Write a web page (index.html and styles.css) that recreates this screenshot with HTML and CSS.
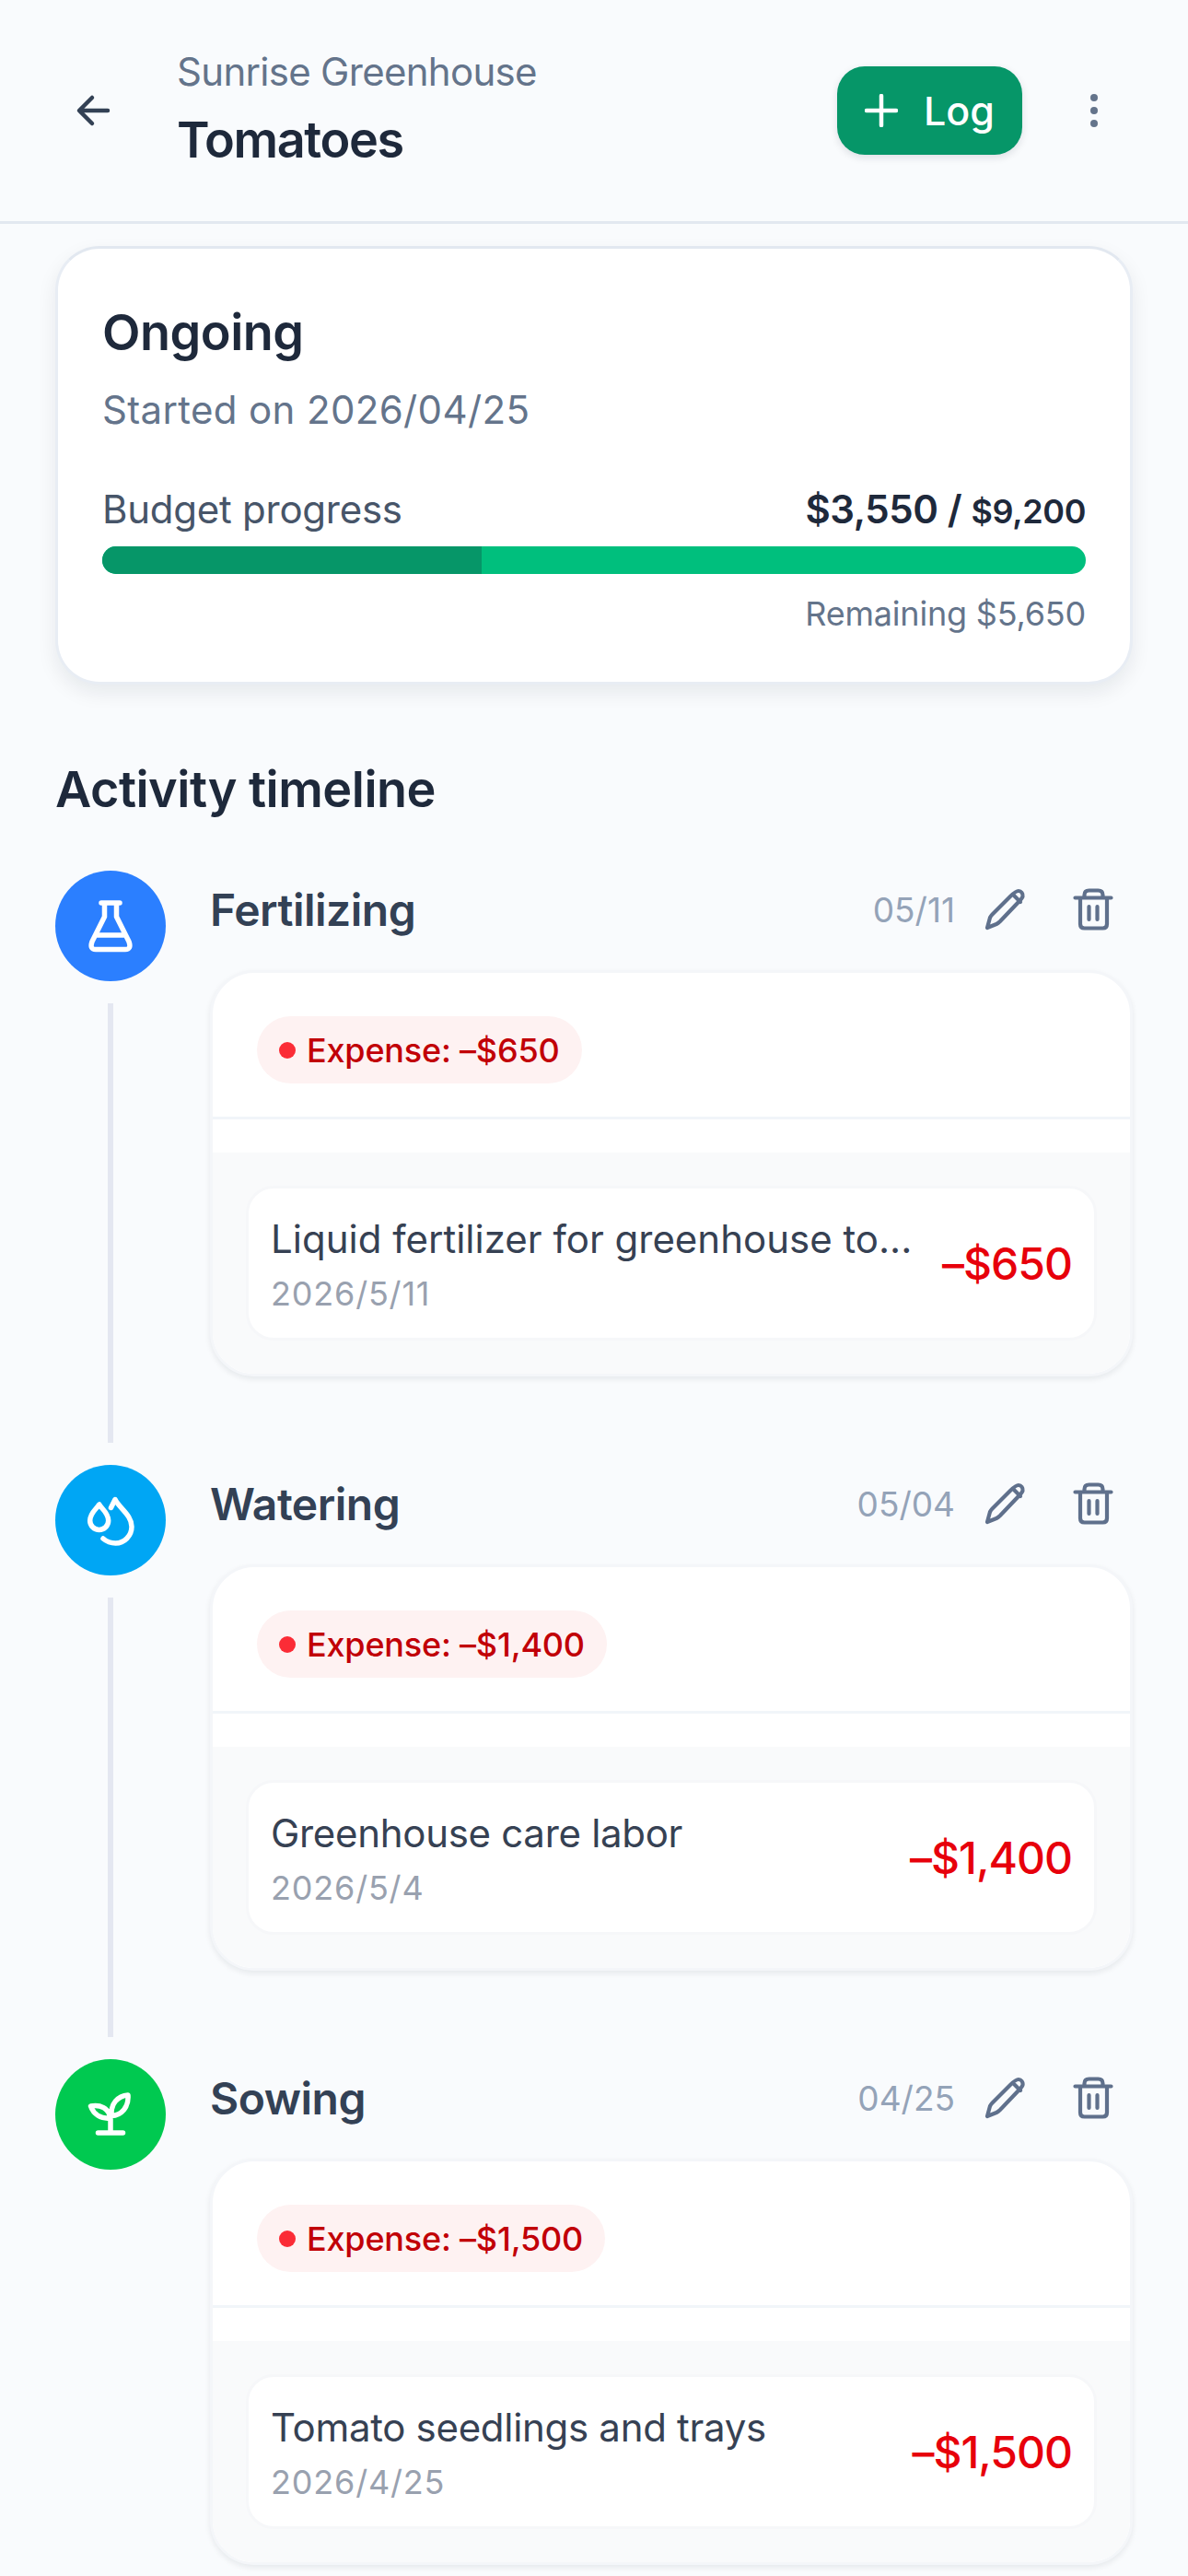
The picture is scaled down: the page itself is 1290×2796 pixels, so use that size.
FILE: index.html
```html
<!DOCTYPE html>
<html lang="en">
<head>
<meta charset="utf-8">
<title>Tomatoes</title>
<link rel="stylesheet" href="styles.css">
</head>
<body>
<header class="topbar">
  <button class="back" aria-label="Back">
    <svg viewBox="0 0 60 60" class="ico-60"><path d="M45 30H15M28 16 14 30l14 14" class="s-dark"/></svg>
  </button>
  <div class="titles">
    <div class="subtitle">Sunrise Greenhouse</div>
    <h1 class="title">Tomatoes</h1>
  </div>
  <button class="log">
    <svg viewBox="0 0 36 36" class="ico-36"><path d="M18 2v32M2 18h32" class="s-white"/></svg>
    <span>Log</span>
  </button>
  <button class="more" aria-label="More">
    <svg viewBox="0 0 60 60" class="ico-60"><circle cx="30" cy="16" r="4"/><circle cx="30" cy="30" r="4"/><circle cx="30" cy="44" r="4"/></svg>
  </button>
</header>

<main class="content">
  <section class="summary">
    <h2 class="status">Ongoing</h2>
    <p class="started">Started on 2026/04/25</p>
    <div class="budget-row">
      <span class="budget-label">Budget progress</span>
      <span class="budget-value">$3,550 / <small>$9,200</small></span>
    </div>
    <div class="bar"><div class="bar-fill" style="width:38.6%"></div></div>
    <div class="remaining">Remaining $5,650</div>
  </section>

  <h2 class="section-title">Activity timeline</h2>

  <div class="timeline">
    <article class="event">
      <div class="rail">
        <div class="node node-blue">
          <svg viewBox="0 0 120 120" class="node-ico"><path d="M50 35h20M53.500 35v15L40 77q-3 8.500 4 8.500h32q7 0 4-8.500L66.500 50V35M45 70h30"/></svg>
        </div>
        <div class="line"></div>
      </div>
      <div class="body">
        <div class="event-head">
          <h3 class="event-name">Fertilizing</h3>
          <span class="event-date">05/11</span>
          <svg viewBox="0 0 60 60" class="ico-60 act"><path d="M13 50l3-11q1-2 2.500-3.500L38 16c3-3 6-6 9-6s5 3 4.500 6c-.5 2-2.500 4-4.500 6L27 43q-2 2-4 3ZM41 14l8 8"/></svg>
          <svg viewBox="0 0 60 60" class="ico-60 act trash"><path d="M11.500 17.500h39M21.500 17.500v-3q0-5 5-5h10q5 0 5 5v3M17 17.500V46q0 4.500 4.500 4.500h20q4.500 0 4.500-4.500V17.500M26.500 27v14M35.500 27v14"/></svg>
        </div>
        <div class="panel">
          <div class="panel-top"><span class="pill"><i class="dot"></i>Expense: –$650</span></div>
          <div class="panel-gap"></div>
          <div class="panel-list">
            <div class="item">
              <div class="item-text">
                <div class="item-name item-name-long">Liquid fertilizer for greenhouse to...</div>
                <div class="item-date">2026/5/11</div>
              </div>
              <div class="item-amount">–$650</div>
            </div>
          </div>
        </div>
      </div>
    </article>

    <article class="event">
      <div class="rail">
        <div class="node node-sky">
          <svg viewBox="0 0 120 120" class="node-ico"><path d="M47.700 43c-3 5-10 9-10 17.500a10 10 0 0 0 20 0c0-8.500-7-12.500-10-17.500ZM60.500 46.500 65 37.500c5 10 18 17 18 29.500 0 10-8 18-17.500 18-5.500 0-10-2-13.500-5"/></svg>
        </div>
        <div class="line"></div>
      </div>
      <div class="body">
        <div class="event-head">
          <h3 class="event-name">Watering</h3>
          <span class="event-date">05/04</span>
          <svg viewBox="0 0 60 60" class="ico-60 act"><path d="M13 50l3-11q1-2 2.500-3.500L38 16c3-3 6-6 9-6s5 3 4.500 6c-.5 2-2.500 4-4.500 6L27 43q-2 2-4 3ZM41 14l8 8"/></svg>
          <svg viewBox="0 0 60 60" class="ico-60 act trash"><path d="M11.500 17.500h39M21.500 17.500v-3q0-5 5-5h10q5 0 5 5v3M17 17.500V46q0 4.500 4.500 4.500h20q4.500 0 4.500-4.500V17.500M26.500 27v14M35.500 27v14"/></svg>
        </div>
        <div class="panel">
          <div class="panel-top"><span class="pill"><i class="dot"></i>Expense: –$1,400</span></div>
          <div class="panel-gap"></div>
          <div class="panel-list">
            <div class="item">
              <div class="item-text">
                <div class="item-name">Greenhouse care labor</div>
                <div class="item-date">2026/5/4</div>
              </div>
              <div class="item-amount">–$1,400</div>
            </div>
          </div>
        </div>
      </div>
    </article>

    <article class="event event-last">
      <div class="rail">
        <div class="node node-green">
          <svg viewBox="0 0 120 120" class="node-ico"><path d="M46.500 80h27M60 80V64M38.500 51c10-2 20 2 21 13-10 1-18-4-21-13ZM79 39c-11 1-19 9-18 22.500 11-.5 19-9.500 18-22.500Z"/></svg>
        </div>
      </div>
      <div class="body">
        <div class="event-head">
          <h3 class="event-name">Sowing</h3>
          <span class="event-date">04/25</span>
          <svg viewBox="0 0 60 60" class="ico-60 act"><path d="M13 50l3-11q1-2 2.500-3.500L38 16c3-3 6-6 9-6s5 3 4.500 6c-.5 2-2.500 4-4.500 6L27 43q-2 2-4 3ZM41 14l8 8"/></svg>
          <svg viewBox="0 0 60 60" class="ico-60 act trash"><path d="M11.500 17.500h39M21.500 17.500v-3q0-5 5-5h10q5 0 5 5v3M17 17.500V46q0 4.500 4.500 4.500h20q4.500 0 4.500-4.500V17.500M26.500 27v14M35.500 27v14"/></svg>
        </div>
        <div class="panel">
          <div class="panel-top"><span class="pill"><i class="dot"></i>Expense: –$1,500</span></div>
          <div class="panel-gap"></div>
          <div class="panel-list">
            <div class="item">
              <div class="item-text">
                <div class="item-name">Tomato seedlings and trays</div>
                <div class="item-date">2026/4/25</div>
              </div>
              <div class="item-amount">–$1,500</div>
            </div>
          </div>
        </div>
      </div>
    </article>
  </div>
</main>
</body>
</html>
```

FILE: styles.css
```css
* { box-sizing: border-box; }
html, body { margin: 0; padding: 0; }
body {
  background: #f9fbfd;
  font-family: Inter, "Noto Sans", sans-serif;
  color: #1e293b;
  width: 1290px;
  height: 2796px;
  overflow: hidden;
}
button { border: 0; background: none; padding: 0; font: inherit; }
h1, h2, h3, p { margin: 0; }

.topbar {
  height: 243px;
  border-bottom: 3px solid #e2e8f0;
  display: flex;
  align-items: center;
  padding: 0 72px;
}
.ico-60 { width: 60px; height: 60px; display: block; flex: none; }
.ico-36 { width: 36px; height: 36px; display: block; flex: none; }
.s-dark { fill: none; stroke: #334155; stroke-width: 4.5; stroke-linecap: round; stroke-linejoin: round; }
.s-white { fill: none; stroke: #fff; stroke-width: 4.5; stroke-linecap: round; }
.back { width: 60px; height: 60px; margin-right: 60px; flex: none; }
.titles { flex: 1; margin-top: -4px; }
.subtitle { font-size: 42px; line-height: 60px; color: #64748b; letter-spacing: -0.7px; }
.title { font-size: 54px; line-height: 72px; font-weight: 600; color: #1e293b; letter-spacing: -1.4px; margin-top: 8px; }
.log {
  width: 201px;
  height: 96px;
  margin-right: 48px;
  border-radius: 30px;
  background: #069668;
  color: #fff;
  font-size: 43px;
  font-weight: 500;
  display: flex;
  align-items: center;
  justify-content: center;
  gap: 28px;
  box-shadow: 0 3px 9px rgba(15, 23, 42, .12);
}
.more { width: 60px; height: 60px; flex: none; }
.more circle { fill: #64748b; }

.content { padding: 24px 60px 0; }

.summary {
  background: #fff;
  border: 3px solid #e8edf4;
  border-top-color: #e2e8f0;
  border-radius: 48px;
  height: 476px;
  padding: 55px 48px 0;
  box-shadow: 0 9px 21px rgba(15, 23, 42, .08);
}
.status { font-size: 54px; line-height: 72px; font-weight: 600; color: #1e293b; letter-spacing: -0.5px; }
.started { font-size: 42px; line-height: 60px; color: #64748b; margin-top: 18px; letter-spacing: 0.35px; }
.budget-row { display: flex; justify-content: space-between; align-items: baseline; margin-top: 48px; line-height: 60px; }
.budget-label { font-size: 42px; color: #475569; letter-spacing: -0.25px; }
.budget-value { font-size: 42px; font-weight: 600; color: #1e293b; letter-spacing: -0.4px; }
.budget-value small { font-size: 36px; }
.bar { height: 30px; margin-top: 8px; border-radius: 15px; background: #00bf7d; overflow: hidden; }
.bar-fill { height: 100%; background: #069668; }
.remaining { text-align: right; font-size: 36px; line-height: 48px; color: #64748b; margin-top: 19px; letter-spacing: -0.2px; }

.section-title { font-size: 54px; line-height: 72px; font-weight: 600; color: #1e293b; margin-top: 78px; letter-spacing: -0.5px; }

.timeline { margin-top: 52px; }
.event { display: flex; gap: 48px; padding-bottom: 96px; }
.event-last { padding-bottom: 0; }
.rail { width: 120px; flex: none; display: flex; flex-direction: column; align-items: center; }
.node { width: 120px; height: 120px; border-radius: 50%; flex: none; }
.node-blue { background: #2b7fff; }
.node-sky { background: #00a6f4; }
.node-green { background: #00c950; }
.node-ico { width: 120px; height: 120px; display: block; fill: none; stroke: #fff; stroke-width: 5.5; stroke-linecap: round; stroke-linejoin: round; }
.line { width: 6px; flex: 1; background: #e4e7f1; margin: 24px 0 -72px; }

.body { flex: 1; min-width: 0; }
.event-head { height: 84px; margin-bottom: 24px; display: flex; align-items: center; padding-right: 14px; }
.event-name { font-size: 48px; font-weight: 600; color: #334155; flex: 1; letter-spacing: -0.5px; }
.event-date { font-size: 37px; color: #94a3b8; margin-right: 22px; }
.act { fill: none; stroke: #5f708c; stroke-width: 4.2; stroke-linecap: round; stroke-linejoin: round; }
.trash { margin-left: 37px; }

.panel {
  background: #fff;
  border-radius: 48px;
  border: 3px solid #f4f6f9;
  overflow: hidden;
  box-shadow: 0 3px 6px rgba(15, 23, 42, .08);
  height: 441px;
}
.panel-top { height: 159px; padding: 47px 0 0 48px; border-bottom: 3px solid #f1f5f9; }
.pill {
  display: inline-flex;
  align-items: center;
  height: 73px;
  padding: 0 24px;
  border-radius: 37px;
  background: #fef2f2;
  color: #c10007;
  font-size: 36px;
  font-weight: 500;
  letter-spacing: -0.2px;
}
.dot { width: 18px; height: 18px; border-radius: 50%; background: #fb2c36; margin-right: 12px; flex: none; }
.panel-gap { height: 36px; }
.panel-list { background: #f9fafb; padding: 36px 36px 0; height: 243px; }
.item {
  height: 168px;
  background: #fff;
  border: 3px solid #f6f7f9;
  border-radius: 30px;
  display: flex;
  align-items: center;
  gap: 20px;
  padding: 0 24px;
}
.item-text { flex: 1; min-width: 0; }
.item-name { font-size: 42px; line-height: 60px; color: #364153; white-space: nowrap; letter-spacing: -0.3px; margin-top: 1px; }
.item-name-long { letter-spacing: 0; }
.item-date { font-size: 36px; line-height: 48px; color: #99a1af; margin-top: 5px; letter-spacing: 0.8px; }
.item-amount { font-size: 48px; font-weight: 500; color: #e7000b; white-space: nowrap; letter-spacing: -1px; }
```
